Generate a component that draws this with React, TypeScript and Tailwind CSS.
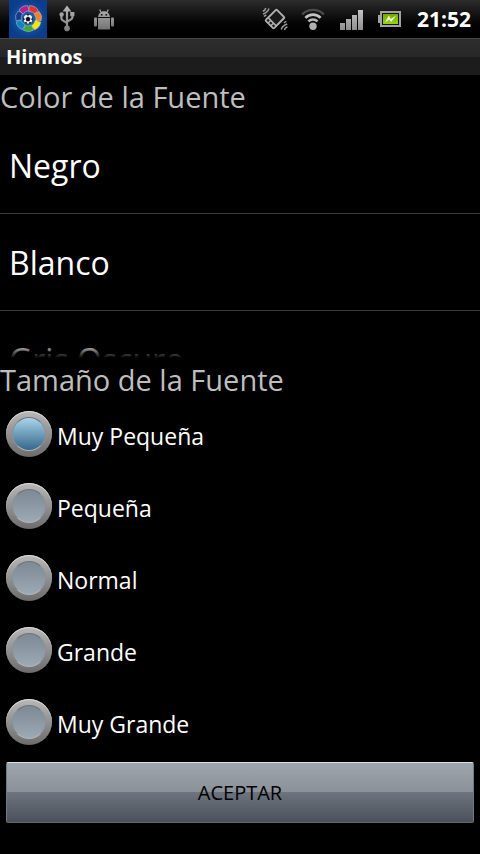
import { useState } from 'react';

const colors = ['Negro', 'Blanco', 'Gris Oscuro'];
const sizes = ['Muy Pequeña', 'Pequeña', 'Normal', 'Grande', 'Muy Grande'];

const logoSegments = [
  { color: '#e5322d', angle: 26 },
  { color: '#f58220', angle: 77 },
  { color: '#f7e600', angle: 129 },
  { color: '#3fa535', angle: 180 },
  { color: '#0f86b8', angle: 231 },
  { color: '#153a8c', angle: 283 },
  { color: '#b5208a', angle: 334 },
];

function LeagueIcon() {
  return (
    <svg width="38" height="38" viewBox="0 0 38 38" aria-hidden="true">
      <defs>
        <radialGradient id="leagueBg">
          <stop offset="0" stopColor="#1c6cc0" />
          <stop offset="1" stopColor="#0c3c8c" />
        </radialGradient>
      </defs>
      <rect width="38" height="38" fill="url(#leagueBg)" />
      {logoSegments.map((s) => (
        <path
          key={s.angle}
          d="M-4.8 -11.8 Q0 -14.6 5 -11.8 L4 -7 Q0 -8 -3 -6.4 Z"
          fill={s.color}
          stroke="#b9c4d6"
          strokeWidth="0.5"
          transform={`translate(19.5 18.5) rotate(${s.angle})`}
        />
      ))}
      <circle cx="19" cy="19" r="4.6" fill="#f2f2f2" />
      <path d="M19 16.6l2.4 1.7-0.9 2.9h-3l-0.9-2.9z" fill="#111" />
      <path d="M17.6 14.4h2.8l-1.4 1zM23.5 17.6v2.8l-1-1zM14.5 17.6v2.8l1-1zM16 22.6l1.5 0.8v-1.2zM22 22.6l-1.5 0.8v-1.2z" fill="#111" stroke="#111" strokeWidth="0.6" />
    </svg>
  );
}

function UsbIcon() {
  return (
    <svg width="16" height="28" viewBox="0 0 16 28" aria-hidden="true">
      <defs>
        <linearGradient id="usbFill" gradientUnits="userSpaceOnUse" x1="0" y1="0" x2="0" y2="28">
          <stop offset="0" stopColor="#b8b8b8" />
          <stop offset="1" stopColor="#777" />
        </linearGradient>
      </defs>
      <path d="M8 0.6l4.4 5.8H3.6z" fill="url(#usbFill)" />
      <path d="M8 5v18M2.4 11v2.6c0 2.6 5.6 2.6 5.6 5.4M13.4 10v2.6c0 2.6-5.4 2.6-5.4 5" fill="none" stroke="url(#usbFill)" strokeWidth="2.2" />
      <circle cx="2.6" cy="9.4" r="2.2" fill="url(#usbFill)" />
      <rect x="11.2" y="7" width="4.2" height="4.2" fill="url(#usbFill)" />
      <circle cx="8" cy="23.4" r="2.8" fill="url(#usbFill)" />
    </svg>
  );
}

function AndroidIcon() {
  return (
    <svg width="20" height="21" viewBox="0 0 20 21" aria-hidden="true">
      <defs>
        <linearGradient id="androidFill" x1="0" y1="0" x2="0" y2="21" gradientUnits="userSpaceOnUse">
          <stop offset="0" stopColor="#b0b0b0" />
          <stop offset="1" stopColor="#707070" />
        </linearGradient>
      </defs>
      <g fill="url(#androidFill)">
        <path d="M4.2 8C4.2 4.4 6.8 2.2 10 2.2S15.8 4.4 15.8 8z" />
        <rect x="4" y="9" width="12" height="11.5" />
        <rect x="0" y="8.5" width="3" height="9" rx="1" />
        <rect x="17" y="8.5" width="3" height="9" rx="1" />
      </g>
      <path d="M5.6 0.6l1.6 2.6M14.4 0.6l-1.6 2.6" stroke="#a8a8a8" strokeWidth="1.2" />
      <rect x="6.9" y="5" width="1.6" height="1.6" fill="#111" />
      <rect x="11.5" y="5" width="1.6" height="1.6" fill="#111" />
    </svg>
  );
}

function VibrateIcon() {
  return (
    <svg width="26" height="24" viewBox="0 0 26 24" aria-hidden="true">
      <g transform="translate(13 12) rotate(45)">
        <rect x="-6.8" y="-8.8" width="13.6" height="17.6" rx="2" fill="#b0b0b0" />
        <rect x="-4.8" y="-6.8" width="9.6" height="10" fill="#1a1a1a" />
        <rect x="-5" y="4.8" width="2.4" height="2.2" fill="#1a1a1a" />
        <rect x="-1.2" y="4.8" width="2.4" height="2.2" fill="#1a1a1a" />
        <rect x="2.6" y="4.8" width="2.4" height="2.2" fill="#1a1a1a" />
      </g>
      <path
        d="M0.8 4.2q2.4-0.8 3-3.2M1 7q4.6-1.4 6-5.4M1.8 9.4q1.4-0.4 2.4-1.6M25.2 17q-4.6 1.4-6 5.4M25.4 19.8q-2.4 0.8-3 3.2M24.4 14.4q-1.4 0.4-2.4 1.6"
        fill="none"
        stroke="#9a9a9a"
        strokeWidth="1.5"
      />
    </svg>
  );
}

function WifiIcon() {
  return (
    <svg width="24" height="23" viewBox="0 0 24 23" aria-hidden="true">
      <path d="M1.2 6.4C7 0.4 17 0.4 22.8 6.4" fill="none" stroke="#4c4c4c" strokeWidth="2.4" />
      <path d="M4.4 9.8C8.6 5.6 15.4 5.6 19.6 9.8" fill="none" stroke="#c4c4c4" strokeWidth="2.6" />
      <path d="M7.4 13.4C10 10.8 14 10.8 16.6 13.4" fill="none" stroke="#b8b8b8" strokeWidth="2.4" />
      <circle cx="12" cy="18.2" r="3.7" fill="#b0b0b0" />
    </svg>
  );
}

function SignalIcon() {
  return (
    <svg width="23" height="20" viewBox="0 0 23 20" aria-hidden="true">
      <defs>
        <linearGradient id="signalFill" x1="0" y1="0" x2="0" y2="20" gradientUnits="userSpaceOnUse">
          <stop offset="0" stopColor="#c4c4c4" />
          <stop offset="1" stopColor="#8e8e8e" />
        </linearGradient>
      </defs>
      <path d="M0 13h5v7H0zM6 9h5v11H6zM12 5h5v15h-5zM18 0h5v20h-5z" fill="url(#signalFill)" />
    </svg>
  );
}

function BatteryIcon() {
  return (
    <svg width="23" height="16" viewBox="0 0 23 16" aria-hidden="true">
      <defs>
        <linearGradient id="batteryFill" x1="0" y1="0" x2="0" y2="1">
          <stop offset="0" stopColor="#76a800" />
          <stop offset="1" stopColor="#94d40c" />
        </linearGradient>
      </defs>
      <path d="M2 0h21v16H2v-4H0V4h2z" fill="#a2a2a2" />
      <rect x="4" y="2" width="17" height="12" fill="#151515" />
      <rect x="5" y="3" width="15" height="10" fill="url(#batteryFill)" />
      <path d="M7 11.6l3.8-7.2 2 3.6 5.6-3.6-5.4 6.6-1.8-2.6z" fill="#f0f5e4" />
    </svg>
  );
}

function StatusBar() {
  return (
    <header className="flex h-[38px] items-center justify-between bg-linear-to-b from-[#2d2d2d] to-black px-[9px]">
      <div className="flex items-center">
        <LeagueIcon />
        <div className="ml-3"><UsbIcon /></div>
        <div className="ml-[19px]"><AndroidIcon /></div>
      </div>
      <div className="flex items-center">
        <VibrateIcon />
        <div className="ml-[13px]"><WifiIcon /></div>
        <div className="ml-[15px] pt-[2px]"><SignalIcon /></div>
        <div className="ml-[15px]"><BatteryIcon /></div>
        <time className="ml-4 text-[21px] leading-6 font-bold">21:52</time>
      </div>
    </header>
  );
}

export default function App() {
  const [color, setColor] = useState('');
  const [size, setSize] = useState('Muy Pequeña');

  return (
    <div className="min-h-screen bg-black font-['Open_Sans','Noto_Sans',sans-serif] text-white">
      <StatusBar />
      <h1 className="h-[37px] border-t border-[#454545] bg-linear-to-b from-[#2e2e2e] via-[#272727] via-50% to-[#1c1c1c] to-50% pl-[6px] text-[20px] leading-9 font-bold">
        Himnos
      </h1>

      <section>
        <h2 className="h-[42px] text-[29px] leading-[44px] text-[#bebebe]">Color de la Fuente</h2>
        <div className="relative h-[241px] overflow-hidden">
          <ul>
            {colors.map((c) => (
              <li key={c} className="border-b border-[#3c3c3c]">
                <button
                  type="button"
                  aria-pressed={color === c}
                  onClick={() => setColor(c)}
                  className="h-24 w-full pt-[2px] pl-[9px] text-left text-[32px] leading-10"
                >
                  {c}
                </button>
              </li>
            ))}
          </ul>
          <div className="pointer-events-none absolute inset-x-0 bottom-0 h-4 bg-linear-to-b from-transparent to-black" />
        </div>
      </section>

      <fieldset>
        <legend className="h-10 text-[29px] leading-[44px] text-[#bebebe]">Tamaño de la Fuente</legend>
        {sizes.map((s) => (
          <label key={s} className="flex h-[72px] items-center gap-[5px] pl-[6px]">
            <input
              type="radio"
              name="size"
              checked={size === s}
              onChange={() => setSize(s)}
              className="relative size-[46px] appearance-none rounded-full bg-linear-to-b from-[#b8b8b8] to-[#6c6c6c] shadow-[inset_0_1px_1px_#dddddd] before:absolute before:inset-[6px] before:rounded-full before:border before:border-t-[#6f757a] before:border-r-[#8c9196] before:border-b-[#b4b4b4] before:border-l-[#8c9196] before:bg-linear-to-b before:from-[#7d8993] before:to-[#9baab6] checked:before:from-[#a9d5ec] checked:before:to-[#35698a]"
            />
            <span className="pt-1 text-[23px] leading-8">{s}</span>
          </label>
        ))}
      </fieldset>

      <div className="px-[6px] pt-1">
        <button
          type="button"
          className="h-[61px] w-full rounded-xs border border-t-[#dcdee0] border-r-[#727982] border-b-[#5f666e] border-l-[#727982] bg-[linear-gradient(#9fa5ad,#8b9199_49%,#6d747d_50%,#4a515a)] text-[20px] leading-7 text-black"
        >
          ACEPTAR
        </button>
      </div>
    </div>
  );
}
